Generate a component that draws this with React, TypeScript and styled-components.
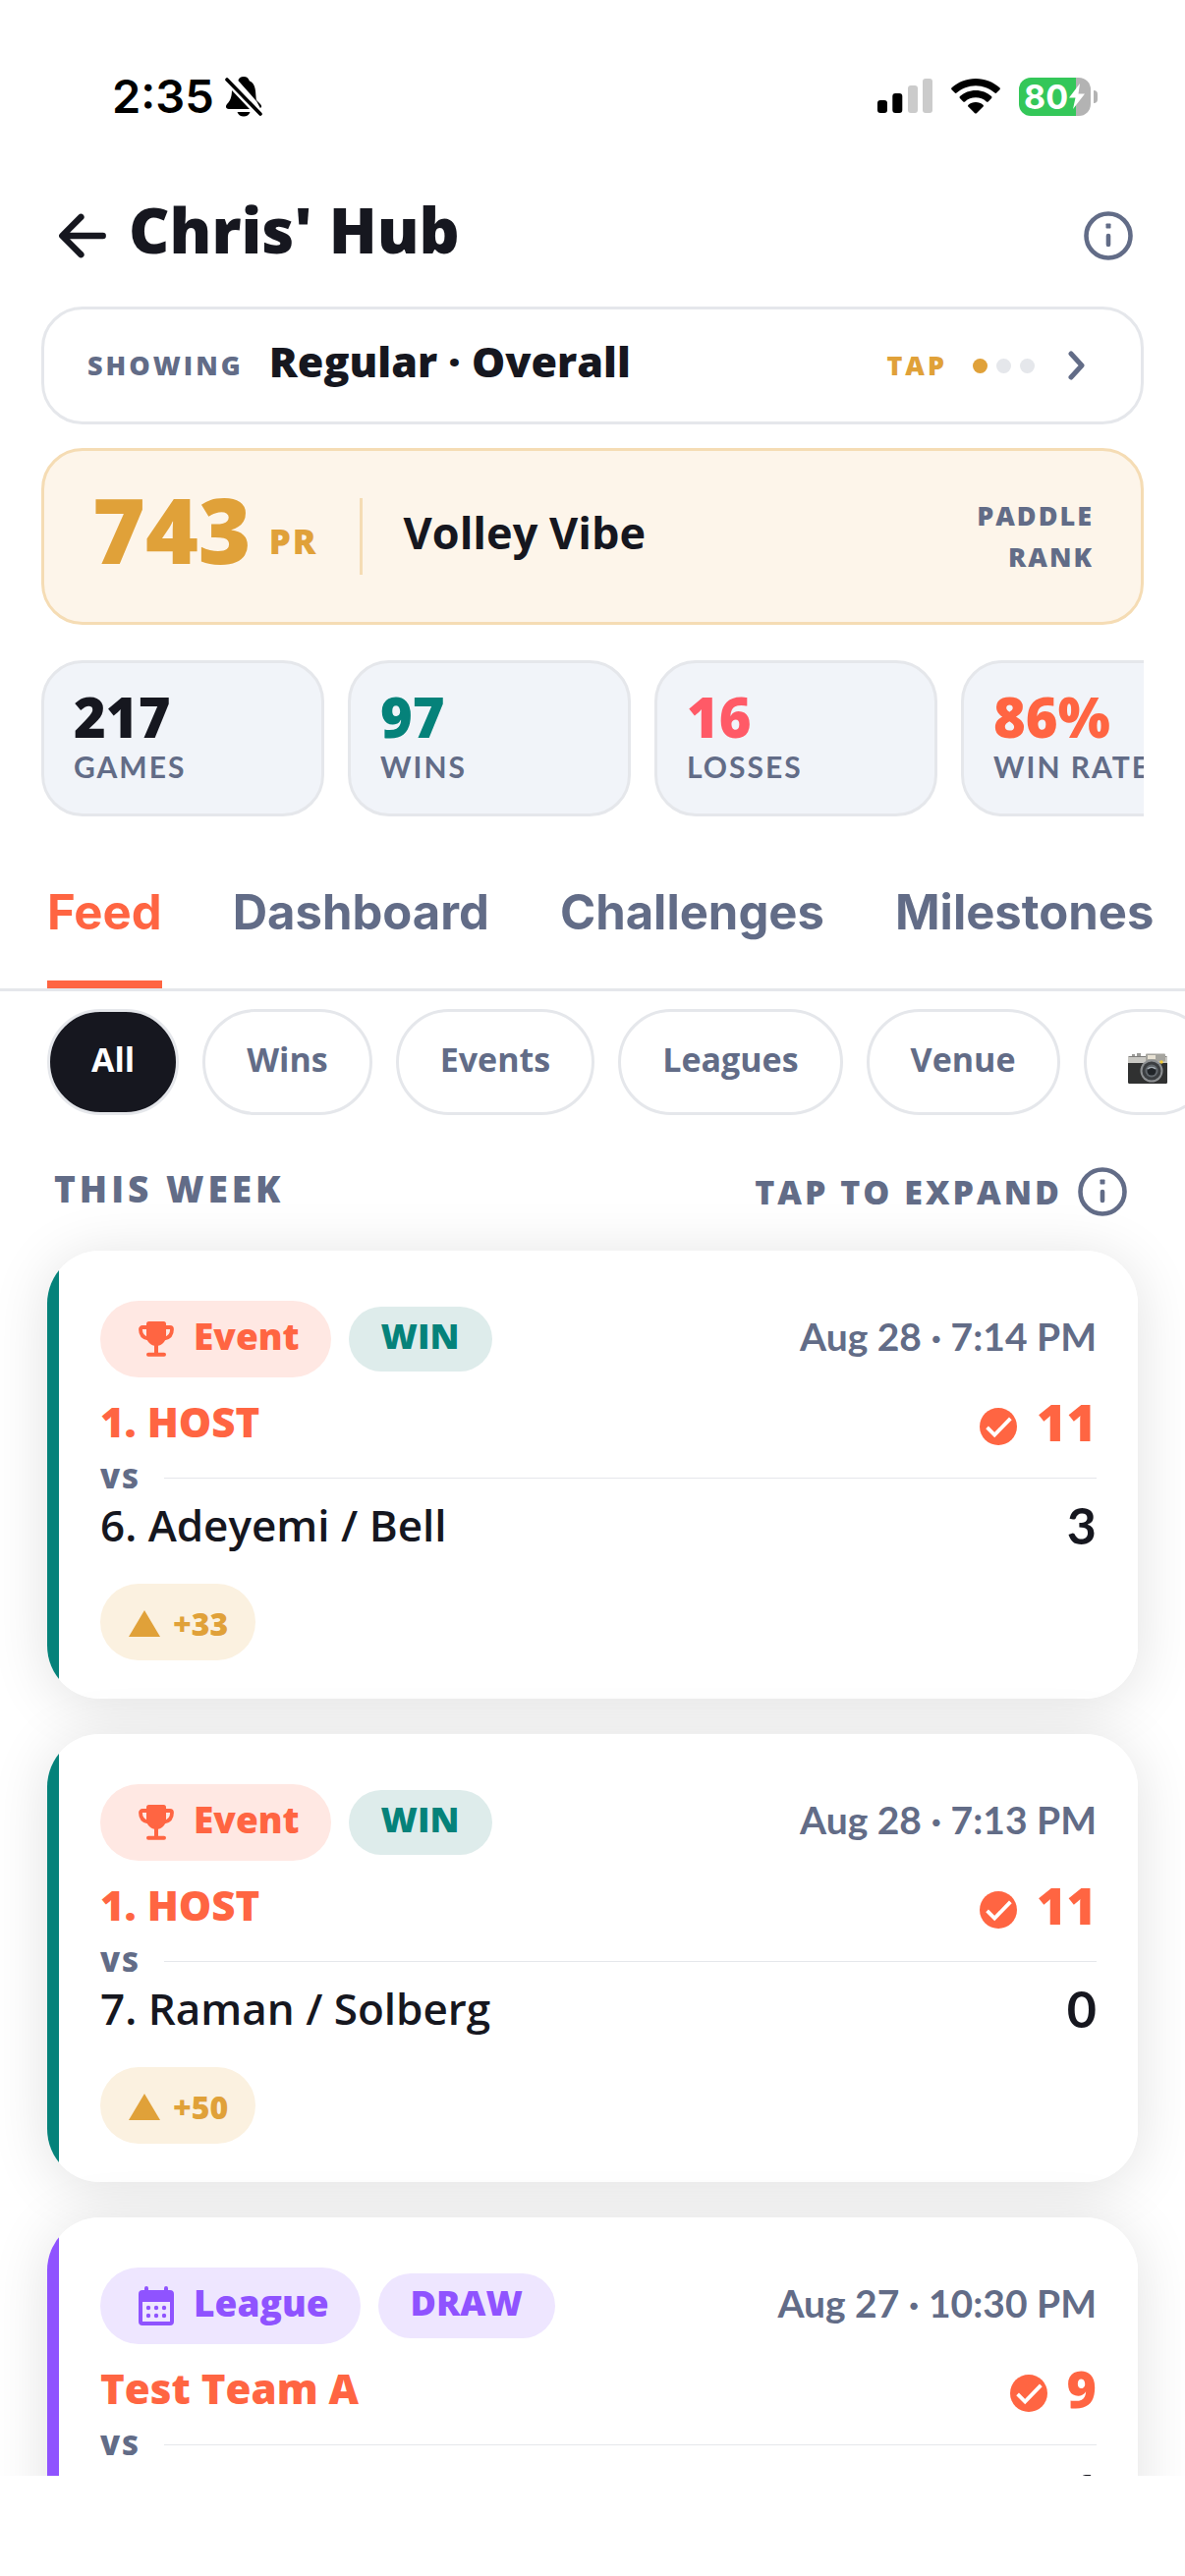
import React from "react";
import styled, { createGlobalStyle } from "styled-components";
import { IoArrowBack } from "react-icons/io5";

const color = {
  ink: "#16171f",
  slate: "#626c87",
  line: "#e5e7eb",
  gold: "#e0a139",
  coral: "#ff6542",
  red: "#ff5a67",
  teal: "#05827a",
  violet: "#8f53ff",
};

const display = `Lato, "Open Sans", sans-serif`;
const heavy = `"Open Sans", Lato, sans-serif`;
const system = `Inter, Roboto, sans-serif`;

const GlobalStyle = createGlobalStyle`
  * { box-sizing: border-box; }
  body { margin: 0; background: #fff; color: ${color.ink}; font-family: ${display}; }
  button { font-family: inherit; margin: 0; border: 0; padding: 0; background: none; color: inherit; cursor: pointer; }
  h1, h2, p { margin: 0; }
  svg { display: block; flex: none; }
`;

const Screen = styled.div`
  display: flex;
  flex-direction: column;
  height: 100vh;
  overflow: hidden;
  padding-bottom: 102px;
`;

/* ---------- status bar ---------- */

const StatusBar = styled.div`
  flex: none;
  display: flex;
  align-items: center;
  justify-content: space-between;
  height: 168px;
  padding: 28px 89px 0 114px;
  font-family: ${system};
`;

const StatusGroup = styled.div<{ $gap: number }>`
  display: flex;
  align-items: center;
  gap: ${(p) => p.$gap}px;
`;

const Clock = styled.span`
  font-size: 47px;
  font-weight: 600;
  line-height: 60px;
  color: #000;
`;

const Battery = styled.div`
  display: flex;
  align-items: center;
  gap: 3px;
`;

const BatteryBody = styled.div`
  display: flex;
  align-items: center;
  width: 73px;
  height: 39px;
  padding-left: 5px;
  border-radius: 12px;
  color: #fff;
  font-size: 34px;
  font-weight: 700;
  line-height: 39px;
  background: linear-gradient(90deg, #34c759 0 58px, #b3b3b3 58px);
`;

const BatteryNub = styled.div`
  width: 4px;
  height: 13px;
  border-radius: 0 6px 6px 0;
  background: #b3b3b3;
`;

/* ---------- header ---------- */

const Header = styled.header`
  flex: none;
  display: flex;
  align-items: center;
  justify-content: space-between;
  height: 144px;
  padding: 0 53px 0 50px;
`;

const TitleGroup = styled.div`
  display: flex;
  align-items: center;
  gap: 13px;
`;

const Title = styled.h1`
  padding-bottom: 12px;
  font-family: ${heavy};
  font-size: 64px;
  font-weight: 800;
  line-height: 72px;
`;

const Summary = styled.section`
  flex: none;
  display: flex;
  flex-direction: column;
  padding: 0 42px;
`;

const Caps = styled.span<{ $tone?: string; $size?: number; $weight?: number; $track?: number }>`
  font-family: ${(p) => (p.$weight ? display : heavy)};
  font-size: ${(p) => p.$size ?? 27}px;
  font-weight: ${(p) => p.$weight ?? 800};
  letter-spacing: ${(p) => p.$track ?? 2}px;
  line-height: 42px;
  text-transform: uppercase;
  white-space: nowrap;
  color: ${(p) => p.$tone ?? color.slate};
`;

const FilterCard = styled.button`
  display: flex;
  align-items: center;
  justify-content: space-between;
  height: 120px;
  padding: 0 57px 0 44px;
  border: 3px solid ${color.line};
  border-radius: 42px;
  background: #fff;
  color: ${color.ink};
`;

const FilterSide = styled.span<{ $gap: number }>`
  display: flex;
  align-items: center;
  gap: ${(p) => p.$gap}px;
`;

const FilterValue = styled.span`
  padding-bottom: 8px;
  font-family: ${heavy};
  font-size: 43px;
  font-weight: 800;
  line-height: 54px;
`;

const Dots = styled.span`
  display: flex;
  gap: 9px;
  margin-right: 8px;
`;

const Dot = styled.span<{ $on?: boolean }>`
  width: 15px;
  height: 15px;
  border-radius: 50%;
  background: ${(p) => (p.$on ? color.gold : color.line)};
`;

const RankCard = styled.div`
  display: flex;
  align-items: center;
  height: 180px;
  margin-top: 24px;
  padding: 0 48px;
  border: 3px solid #f5dcb4;
  border-radius: 42px;
  background: #fdf5ea;
`;

const RankScore = styled.div`
  display: flex;
  align-items: flex-end;
  gap: 18px;
  padding: 0 42px 14px 1px;
  color: ${color.gold};
`;

const RankNumber = styled.span`
  font-family: ${heavy};
  font-size: 92px;
  font-weight: 800;
  line-height: 96px;
`;

const RankUnit = styled.span`
  font-family: ${heavy};
  font-size: 35px;
  font-weight: 800;
  letter-spacing: 2px;
  line-height: 72px;
`;

const RankDivider = styled.div`
  width: 3px;
  height: 78px;
  background: #f5dcb4;
`;

const RankName = styled.div`
  flex: 1;
  padding: 0 0 8px 42px;
  font-family: ${heavy};
  font-size: 45px;
  font-weight: 700;
  line-height: 54px;
`;

const RankLabel = styled.div`
  display: flex;
  flex-direction: column;
  align-items: flex-end;
`;

const Stats = styled.div`
  display: flex;
  gap: 24px;
  margin-top: 36px;
  overflow: hidden;
`;

const StatCard = styled.div`
  flex: none;
  display: flex;
  flex-direction: column;
  width: 288px;
  height: 159px;
  padding: 24px 30px;
  border: 3px solid ${color.line};
  border-radius: 42px;
  background: #f1f4f9;
`;

const StatValue = styled.span<{ $tone: string }>`
  font-family: ${heavy};
  font-size: 56px;
  font-weight: 800;
  line-height: 60px;
  color: ${(p) => p.$tone};
`;

/* ---------- tabs and chips ---------- */

const Tabs = styled.nav`
  flex: none;
  display: flex;
  align-items: stretch;
  gap: 72px;
  height: 144px;
  margin-top: 34px;
  padding: 0 48px;
  overflow: hidden;
  border-bottom: 3px solid ${color.line};
  font-family: ${system};
`;

const Tab = styled.button<{ $active?: boolean }>`
  flex: none;
  padding: 0 0 6px;
  border-bottom: 8px solid ${(p) => (p.$active ? color.coral : "transparent")};
  color: ${(p) => (p.$active ? color.coral : color.slate)};
  font-size: 49px;
  font-weight: 700;
  line-height: 60px;
`;

const Chips = styled.div`
  flex: none;
  display: flex;
  gap: 24px;
  padding: 18px 0 0 48px;
  overflow: hidden;
`;

const Chip = styled.button<{ $active?: boolean }>`
  flex: none;
  display: flex;
  align-items: center;
  height: 108px;
  padding: 0 42px 6px;
  border: 3px solid ${color.line};
  border-radius: 54px;
  background: ${(p) => (p.$active ? color.ink : "#fff")};
  color: ${(p) => (p.$active ? "#fff" : color.slate)};
  font-family: ${heavy};
  font-size: 34px;
  font-weight: 700;
  line-height: 48px;
`;

const ChipIcon = styled.span`
  padding-top: 20px;
`;

/* ---------- feed ---------- */

const Feed = styled.main`
  flex: 1;
  min-height: 0;
  overflow: hidden;
  display: flex;
  flex-direction: column;
`;

const FeedHeader = styled.div`
  flex: none;
  display: flex;
  align-items: center;
  justify-content: space-between;
  height: 138px;
  padding: 18px 59px 0 55px;
`;

const FeedTitle = styled.h2`
  padding-bottom: 6px;
  font-family: ${heavy};
  font-size: 37px;
  font-weight: 800;
  letter-spacing: 4px;
  line-height: 48px;
  color: ${color.slate};
`;

const Expand = styled.button`
  display: flex;
  align-items: center;
  gap: 16px;
`;

const List = styled.div`
  display: flex;
  flex-direction: column;
  gap: 36px;
  padding: 0 48px;
`;

const Card = styled.article<{ $accent: string }>`
  flex: none;
  min-height: 456px;
  padding: 51px 42px 39px 54px;
  border-radius: 54px;
  background: linear-gradient(90deg, ${(p) => p.$accent} 0 12px, #fff 12px);
  box-shadow: 0 6px 60px rgba(0, 0, 0, 0.12);
`;

const CardHead = styled.div`
  display: flex;
  align-items: center;
  justify-content: space-between;
  margin-bottom: 21px;
`;

const Badges = styled.div`
  display: flex;
  align-items: center;
  gap: 18px;
`;

const KindBadge = styled.span<{ $tone: string; $fill: string }>`
  display: flex;
  align-items: center;
  gap: 20px;
  height: 78px;
  padding: 0 32px 0 39px;
  border-radius: 39px;
  background: ${(p) => p.$fill};
  color: ${(p) => p.$tone};
  font-family: ${heavy};
  font-size: 37px;
  font-weight: 800;
  line-height: 48px;
`;

const BadgeText = styled.span`
  padding-bottom: 6px;
`;

const ResultBadge = styled.span<{ $tone: string; $fill: string }>`
  height: 66px;
  padding: 6px 33px 12px;
  border-radius: 33px;
  background: ${(p) => p.$fill};
  color: ${(p) => p.$tone};
  font-family: ${heavy};
  font-size: 36px;
  font-weight: 800;
  line-height: 48px;
`;

const When = styled.time`
  padding-bottom: 6px;
  font-size: 39px;
  font-weight: 700;
  line-height: 48px;
  color: ${color.slate};
`;

const Team = styled.div<{ $host?: boolean }>`
  display: flex;
  align-items: center;
  justify-content: space-between;
  height: 48px;
  color: ${(p) => (p.$host ? color.coral : color.ink)};
  font-family: ${heavy};
  font-size: ${(p) => (p.$host ? 42 : 44)}px;
  font-weight: ${(p) => (p.$host ? 800 : 600)};
  line-height: 48px;
`;

const Score = styled.span<{ $host?: boolean }>`
  display: flex;
  align-items: flex-end;
  gap: 20px;
  margin-left: auto;
  font-family: ${(p) => (p.$host ? heavy : display)};
  font-size: 52px;
  font-weight: ${(p) => (p.$host ? 800 : 700)};
  line-height: 48px;
`;

const Versus = styled.div`
  display: flex;
  align-items: center;
  gap: 24px;
  height: 48px;
  margin-top: 9px;
`;

const Rule = styled.div`
  flex: 1;
  height: 1px;
  background: ${color.line};
`;

const Delta = styled.div`
  display: inline-flex;
  align-items: center;
  gap: 13px;
  height: 78px;
  margin-top: 36px;
  padding: 3px 28px 0 29px;
  border-radius: 39px;
  background: #fbf1e0;
  color: ${color.gold};
  font-family: ${heavy};
  font-size: 32px;
  font-weight: 800;
  line-height: 48px;
`;

/* ---------- icons ---------- */

const BellOff = () => (
  <svg width="38" height="42" viewBox="0 0 38 42">
    <path d="M19 1c-3 0-5 1.600-5.600 4L32 26c0 0-.5-4-.9-9.500C30.700 10 28 6.800 24.800 5.200 24 2.600 22 1 19 1zM7 15c-.2 7-1.600 10.500-5 14-2 2.500-1 5 2 5h21zM12.500 37h13c-1 3-3.500 4.500-6.500 4.500S13.500 40 12.500 37z" fill="#000" />
    <path d="M2 4l34 35" stroke="#000" strokeWidth="3.600" strokeLinecap="round" />
    <path d="M31 24l5 5c1.500 2 1.500 3-.1 4" fill="#000" />
  </svg>
);

const Signal = () => (
  <svg width="56" height="36" viewBox="0 0 56 36">
    <rect x="0" y="22" width="10" height="13" rx="3" fill="#000" />
    <rect x="15.300" y="15" width="10" height="20" rx="3" fill="#000" />
    <rect x="31" y="7" width="10" height="28" rx="3" fill="#cbcbcb" />
    <rect x="46" y="0" width="10" height="35" rx="3" fill="#cbcbcb" />
  </svg>
);

const Wifi = () => (
  <svg width="50" height="36" viewBox="0 0 50 36">
    <path d="M25 0C15.500 0 7 3.500.6 9.300c-.6.600-.6 1.300-.1 1.900l3.300 3.400c.5.500 1.200.5 1.800 0C10.800 10 17.500 7.200 25 7.200S39.200 10 44.400 14.600c.6.500 1.300.5 1.800 0l3.300-3.400c.5-.6.500-1.300-.1-1.900C43 3.500 34.500 0 25 0z" />
    <path d="M25 12c-6.200 0-11.800 2.300-16 6-.6.600-.6 1.300-.1 1.900l3.400 3.500c.5.500 1.200.5 1.800 0 3-2.600 6.700-4.100 10.900-4.100s7.900 1.500 10.900 4.100c.6.500 1.300.5 1.800 0l3.400-3.500c.5-.6.500-1.300-.1-1.900-4.200-3.700-9.800-6-16-6z" />
    <path d="M25 24c-2.900 0-5.500 1-7.500 2.700-.6.600-.6 1.200-.1 1.800l6.700 6.700c.6.500 1.200.5 1.800 0l6.700-6.700c.5-.6.500-1.200-.1-1.800C30.500 25 27.900 24 25 24z" />
  </svg>
);

const Bolt = () => (
  <svg width="18" height="28" viewBox="0 0 18 28">
    <path d="M12 1L1 15.500h6.500L5 27 17 11.500h-6.500z" fill="#fff" />
  </svg>
);

const Info = () => (
  <svg width="50" height="50" viewBox="0 0 50 50" fill="none" stroke={color.slate}>
    <circle cx="25" cy="25" r="22.500" strokeWidth="4.600" />
    <path d="M25 25v9" strokeWidth="4.600" strokeLinecap="round" />
    <rect x="22.500" y="12.500" width="5" height="5" rx="0.800" fill={color.slate} stroke="none" />
  </svg>
);

const Chevron = () => (
  <svg width="17" height="30" viewBox="0 0 17 30" fill="none">
    <path d="M3 3l11 12L3 27" stroke={color.slate} strokeWidth="5" strokeLinecap="round" strokeLinejoin="round" />
  </svg>
);

const Trophy = () => (
  <svg width="36" height="36" viewBox="0 0 36 36">
    <path d="M10.500 0h15A2.500 2.500 0 0 1 28 2.500V15c0 5.500-4.500 10-10 10S8 20.500 8 15V2.500A2.500 2.500 0 0 1 10.500 0z" fill={color.coral} />
    <path d="M9 6H4a2 2 0 0 0-2 2c0 5 2.500 8.500 7.500 9.500M27 6h5a2 2 0 0 1 2 2c0 5-2.500 8.500-7.500 9.500" fill="none" stroke={color.coral} strokeWidth="3.800" />
    <path d="M18 23v10M10 33.700h16" stroke={color.coral} strokeWidth="4" strokeLinecap="round" />
  </svg>
);

const Calendar = () => (
  <svg width="36" height="40" viewBox="0 0 36 40">
    <path fillRule="evenodd" d="M4 4h2V2a2 2 0 0 1 4 0v2h16V2a2 2 0 0 1 4 0v2h2a4 4 0 0 1 4 4v28a4 4 0 0 1-4 4H4a4 4 0 0 1-4-4V8a4 4 0 0 1 4-4zM4 16v20h28V16z" fill={color.violet} />
    {[22, 30].map((y) => [10, 18, 26].map((x) => <circle key={`${x}-${y}`} cx={x} cy={y} r="2.200" fill={color.violet} />))}
  </svg>
);

const Check = () => (
  <svg width="38" height="38" viewBox="2 2 20 20">
    <circle cx="12" cy="12" r="10" fill={color.coral} />
    <path d="M6 12.500l4 4 8.500-8.800" fill="none" stroke="#fff" strokeWidth="2" />
  </svg>
);

const Triangle = () => (
  <svg width="32" height="27" viewBox="0 0 32 27">
    <path d="M16 0l16 27H0z" fill={color.gold} />
  </svg>
);

const Camera = () => (
  <svg width="40" height="32" viewBox="0 0 40 32">
    <path d="M4 1h3v3H4zM9 0h4v4H9z" fill="#9b9b98" />
    <rect x="0" y="3" width="40" height="28" rx="1.500" fill="#303131" />
    <path d="M0 3.500h40V10H0z" fill="#c9c8c3" />
    <rect x="18" y="0.500" width="20" height="8" rx="1" fill="#a5a49e" />
    <rect x="20" y="2" width="8" height="4" fill="#e8e2d4" />
    <circle cx="34" cy="9" r="1.800" fill="#f0ca3a" />
    <circle cx="24" cy="18" r="11.500" fill="#8d9092" />
    <circle cx="24" cy="18" r="9.500" fill="#3b3e41" />
    <circle cx="24" cy="18" r="6.500" fill="#62686d" />
    <circle cx="24" cy="18" r="4.500" fill="#202428" />
    <path d="M20 16c2-2.500 6-2.500 8 0" stroke="#a3abb1" strokeWidth="1.500" fill="none" />
  </svg>
);

/* ---------- data ---------- */

const stats = [
  { value: "217", label: "Games", tone: color.ink },
  { value: "97", label: "Wins", tone: color.teal },
  { value: "16", label: "Losses", tone: color.red },
  { value: "86%", label: "Win rate", tone: color.coral },
];

const tabs = ["Feed", "Dashboard", "Challenges", "Milestones"];
const chips = ["All", "Wins", "Events", "Leagues", "Venue"];

type Match = {
  kind: "Event" | "League";
  result: "WIN" | "DRAW";
  when: string;
  host: string;
  hostScore: number;
  guest?: string;
  guestScore: number;
  delta?: string;
};

const matches: Match[] = [
  { kind: "Event", result: "WIN", when: "Aug 28 · 7:14 PM", host: "1. HOST", hostScore: 11, guest: "6. Adeyemi / Bell", guestScore: 3, delta: "+33" },
  { kind: "Event", result: "WIN", when: "Aug 28 · 7:13 PM", host: "1. HOST", hostScore: 11, guest: "7. Raman / Solberg", guestScore: 0, delta: "+50" },
  { kind: "League", result: "DRAW", when: "Aug 27 · 10:30 PM", host: "Test Team A", hostScore: 9, guestScore: 6 },
];

const kinds = {
  Event: { tone: color.coral, fill: "#ffe8e3", icon: <Trophy /> },
  League: { tone: color.violet, fill: "#eee6ff", icon: <Calendar /> },
};

const results = {
  WIN: { tone: color.teal, fill: "#deeceb" },
  DRAW: { tone: color.violet, fill: "#eee6ff" },
};

const MatchCard = ({ match }: { match: Match }) => {
  const kind = kinds[match.kind];
  const result = results[match.result];
  return (
    <Card $accent={result.tone}>
      <CardHead>
        <Badges>
          <KindBadge $tone={kind.tone} $fill={kind.fill}>
            {kind.icon}
            <BadgeText>{match.kind}</BadgeText>
          </KindBadge>
          <ResultBadge $tone={result.tone} $fill={result.fill}>{match.result}</ResultBadge>
        </Badges>
        <When>{match.when}</When>
      </CardHead>
      <Team $host>
        {match.host}
        <Score $host><Check />{match.hostScore}</Score>
      </Team>
      <Versus>
        <Caps $size={29}>VS</Caps>
        <Rule />
      </Versus>
      <Team>
        {match.guest}
        <Score>{match.guestScore}</Score>
      </Team>
      {match.delta && (
        <Delta><Triangle />{match.delta}</Delta>
      )}
    </Card>
  );
};

export default function App() {
  return (
    <Screen>
      <GlobalStyle />
      <StatusBar>
        <StatusGroup $gap={11}>
          <Clock>2:35</Clock>
          <BellOff />
        </StatusGroup>
        <StatusGroup $gap={19}>
          <Signal />
          <Wifi />
          <Battery>
            <BatteryBody>80<Bolt /></BatteryBody>
            <BatteryNub />
          </Battery>
        </StatusGroup>
      </StatusBar>

      <Header>
        <TitleGroup>
          <button aria-label="Back"><IoArrowBack size={68} /></button>
          <Title>Chris' Hub</Title>
        </TitleGroup>
        <button aria-label="About this hub"><Info /></button>
      </Header>

      <Summary>
        <FilterCard>
          <FilterSide $gap={26}>
            <Caps $track={3}>Showing</Caps>
            <FilterValue>Regular · Overall</FilterValue>
          </FilterSide>
          <FilterSide $gap={26}>
            <Caps $tone={color.gold} $track={3}>Tap</Caps>
            <Dots><Dot $on /><Dot /><Dot /></Dots>
            <Chevron />
          </FilterSide>
        </FilterCard>

        <RankCard>
          <RankScore>
            <RankNumber>743</RankNumber>
            <RankUnit>PR</RankUnit>
          </RankScore>
          <RankDivider />
          <RankName>Volley Vibe</RankName>
          <RankLabel>
            <Caps>Paddle</Caps>
            <Caps>Rank</Caps>
          </RankLabel>
        </RankCard>

        <Stats>
          {stats.map((s) => (
            <StatCard key={s.label}>
              <StatValue $tone={s.tone}>{s.value}</StatValue>
              <Caps $size={30} $weight={700}>{s.label}</Caps>
            </StatCard>
          ))}
        </Stats>
      </Summary>

      <Tabs>
        {tabs.map((t, i) => <Tab key={t} $active={i === 0}>{t}</Tab>)}
      </Tabs>

      <Chips>
        {chips.map((c, i) => <Chip key={c} $active={i === 0}>{c}</Chip>)}
        <Chip aria-label="Photos"><ChipIcon><Camera /></ChipIcon></Chip>
      </Chips>

      <Feed>
        <FeedHeader>
          <FeedTitle>THIS WEEK</FeedTitle>
          <Expand>
            <Caps $size={34} $track={3}>Tap to expand</Caps>
            <Info />
          </Expand>
        </FeedHeader>
        <List>
          {matches.map((m) => <MatchCard key={m.when} match={m} />)}
        </List>
      </Feed>
    </Screen>
  );
}
